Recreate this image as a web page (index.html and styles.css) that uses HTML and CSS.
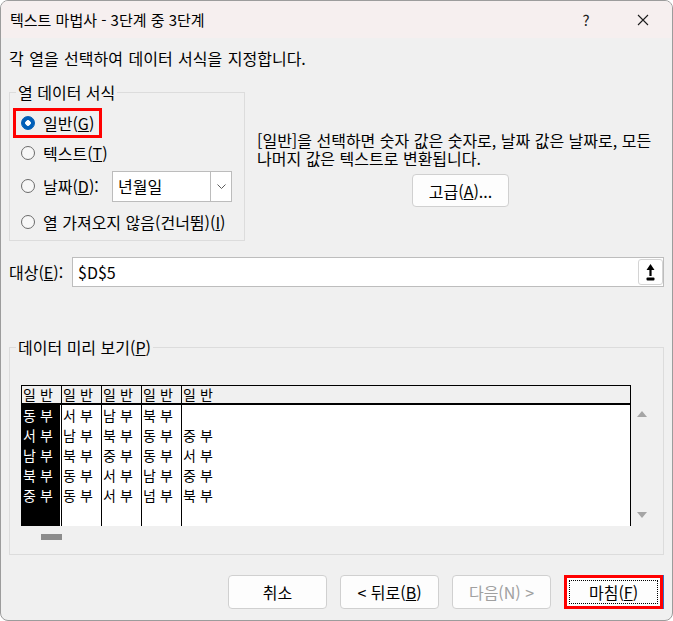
FILE: index.html
```html
<!DOCTYPE html>
<html lang="ko">
<head>
  <meta charset="UTF-8">
  <title>텍스트 마법사 - 3단계 중 3단계</title>
  <link rel="stylesheet" href="styles.css">
</head>
<body>
<div class="window">
  <div class="titlebar">
    <span class="title">텍스트 마법사 - 3단계 중 3단계</span>
    <span class="title-btn">?</span>
    <span class="title-btn close">
      <svg width="12" height="12" viewBox="0 0 12 12"><path d="M1 1L11 11M11 1L1 11" stroke="#1c1c1c" stroke-width="1.1" fill="none"/></svg>
    </span>
  </div>

  <div class="content">
    <p class="intro">각 열을 선택하여 데이터 서식을 지정합니다.</p>

    <div class="top-row">
      <fieldset class="group format-group">
        <legend>열 데이터 서식</legend>
        <div class="radio-row">
          <label class="radio marked"><input type="radio" name="fmt" checked>일반(<u>G</u>)</label>
        </div>
        <div class="radio-row">
          <label class="radio"><input type="radio" name="fmt">텍스트(<u>T</u>)</label>
        </div>
        <div class="radio-row tall">
          <label class="radio"><input type="radio" name="fmt">날짜(<u>D</u>):</label>
          <div class="combo">
            <span class="combo-text">년월일</span>
            <span class="combo-btn">
              <svg width="9" height="5" viewBox="0 0 9 5"><path d="M0.5 0.5L4.5 4.5L8.5 0.5" stroke="#5c5c5c" fill="none"/></svg>
            </span>
          </div>
        </div>
        <div class="radio-row tall">
          <label class="radio"><input type="radio" name="fmt">열 가져오지 않음(건너뜀)(<u>I</u>)</label>
        </div>
      </fieldset>

      <div class="desc">
        <p>[일반]을 선택하면 숫자 값은 숫자로, 날짜 값은 날짜로, 모든 나머지 값은 텍스트로 변환됩니다.</p>
        <button type="button" class="btn btn-adv">고급(<u>A</u>)...</button>
      </div>
    </div>

    <div class="target-row">
      <label>대상(<u>E</u>):</label>
      <div class="target-input">
        <span>$D$5</span>
        <span class="ref-btn">
          <svg width="9" height="17" viewBox="0 0 9 17"><path d="M4.5 0L8.5 6H5.6V12H3.4V6H0.5Z" fill="#000"/><rect x="0.5" y="13.5" width="8" height="3" rx="1" fill="#000"/></svg>
        </span>
      </div>
    </div>

    <fieldset class="group preview-group">
      <legend>데이터 미리 보기(<u>P</u>)</legend>
      <div class="preview-body">
        <table class="preview-table">
          <tr><th>일반</th><th>일반</th><th>일반</th><th>일반</th><th>일반</th></tr>
          <tr><td>동부</td><td>서부</td><td>남부</td><td>북부</td><td></td></tr>
          <tr><td>서부</td><td>남부</td><td>북부</td><td>동부</td><td>중부</td></tr>
          <tr><td>남부</td><td>북부</td><td>중부</td><td>동부</td><td>서부</td></tr>
          <tr><td>북부</td><td>동부</td><td>서부</td><td>남부</td><td>중부</td></tr>
          <tr><td>중부</td><td>동부</td><td>서부</td><td>넘부</td><td>북부</td></tr>
          <tr class="filler"><td></td><td></td><td></td><td></td><td></td></tr>
        </table>
        <div class="vscroll">
          <span class="arrow-up"></span>
          <span class="arrow-down"></span>
        </div>
      </div>
      <div class="hscroll"><div class="hscroll-thumb"></div></div>
    </fieldset>

    <div class="footer">
      <button type="button" class="btn">취소</button>
      <button type="button" class="btn">&lt; 뒤로(<u>B</u>)</button>
      <button type="button" class="btn btn-disabled">다음(N) &gt;</button>
      <button type="button" class="btn btn-finish">마침(<u>F</u>)</button>
    </div>
  </div>
</div>
</body>
</html>
```

FILE: styles.css
```css
body {
  margin: 0;
  background: #fff;
  font-family: "Noto Sans CJK KR", sans-serif;
  font-size: 16px;
  color: #000;
}

.window {
  width: 673px;
  height: 621px;
  box-sizing: border-box;
  border: 1px solid #9c9c9c;
  border-radius: 8px;
  overflow: hidden;
  background: #f0f0f0;
}

.titlebar {
  height: 37px;
  display: flex;
  align-items: center;
  padding: 0 6px 0 9px;
  background: #f6efef;
  font-size: 15px;
}

.title {
  flex: 1;
}

.title-btn {
  width: 46px;
  text-align: center;
  color: #1c1c1c;
}

.title-btn.close {
  margin-left: 11px;
  display: flex;
  justify-content: center;
}

.content {
  padding: 0 8px;
}

.intro {
  margin: 10px 0 0;
  line-height: 20px;
  word-spacing: 1px;
}

.top-row {
  display: flex;
  margin-top: 14px;
}

.group {
  margin: 0;
  min-width: 0;
  border: 1px solid #dcdcdc;
}

.group legend {
  padding: 0 2px;
  margin-left: 3px;
  line-height: 20px;
}

.format-group {
  width: 236px;
  box-sizing: border-box;
  padding: 6px 12px 0 3px;
}

.radio-row {
  display: flex;
  align-items: center;
  height: 30px;
}

.radio-row.tall {
  height: 36px;
}

.radio {
  display: inline-flex;
  align-items: center;
  height: 30px;
  box-sizing: border-box;
  border: 3px solid transparent;
  padding: 0 5px;
  white-space: nowrap;
}

.radio.marked {
  border-color: #f00;
}

.radio input {
  appearance: none;
  width: 14px;
  height: 14px;
  margin: 0 8px 0 0;
  box-sizing: border-box;
  border: 1px solid #6b6b6b;
  border-radius: 50%;
  background: #f7f7f7;
}

.radio input:checked {
  border-color: #005fb8;
  background: radial-gradient(circle, #fff 0 2.5px, #005fb8 3px);
}

.combo {
  margin-left: auto;
  width: 120px;
  height: 31px;
  box-sizing: border-box;
  display: flex;
  border: 1px solid #bcbcbc;
  background: #fff;
}

.combo-text {
  flex: 1;
  padding-left: 5px;
  line-height: 29px;
}

.combo-btn {
  width: 20px;
  border-left: 1px solid #bcbcbc;
  display: flex;
  align-items: center;
  justify-content: center;
}

.desc {
  flex: 1;
  margin-left: 12px;
  padding-top: 49px;
}

.desc p {
  margin: 0;
  line-height: 18px;
}

.btn {
  font: inherit;
  color: #000;
  width: 99px;
  height: 34px;
  padding: 0;
  background: #fdfdfd;
  border: 1px solid #d0d0d0;
  border-radius: 4px;
}

.btn-adv {
  display: block;
  width: 97px;
  height: 33px;
  margin: 7px auto 0;
}

.target-row {
  display: flex;
  align-items: center;
  margin-top: 16px;
}

.target-row label {
  width: 63px;
}

.target-input {
  flex: 1;
  height: 30px;
  box-sizing: border-box;
  display: flex;
  align-items: center;
  padding-left: 5px;
  border: 1px solid #bdbdbd;
  background: #fff;
}

.target-input span:first-child {
  flex: 1;
}

.ref-btn {
  width: 25px;
  height: 26px;
  box-sizing: border-box;
  display: flex;
  align-items: center;
  justify-content: center;
  border: 1px solid #d4d4d4;
  border-radius: 3px;
  background: #fff;
}

.preview-group {
  margin-top: 50px;
  padding: 28px 0 0 3px;
}

.preview-body {
  display: flex;
  margin-left: 8px;
}

.preview-table {
  width: 610px;
  border-collapse: separate;
  border-spacing: 0;
  table-layout: fixed;
  font-size: 14px;
  letter-spacing: 4px;
}

.preview-table th,
.preview-table td {
  box-sizing: border-box;
  padding: 0 0 0 1px;
  border-left: 1px solid #000;
  text-align: left;
  font-weight: normal;
  white-space: nowrap;
  overflow: hidden;
}

.preview-table th {
  width: 40px;
  height: 20px;
  line-height: 17px;
  border-top: 1px solid #000;
  border-bottom: 2px solid #000;
}

.preview-table th:last-child {
  width: auto;
}

.preview-table td {
  height: 20px;
  line-height: 20px;
  background: #fff;
}

.preview-table th:last-child,
.preview-table td:last-child {
  border-right: 1px solid #000;
}

.preview-table td:first-child {
  background: #000;
  color: #fff;
  box-shadow: inset -1px 0 #fff;
}

.preview-table .filler td {
  height: 21px;
}

.vscroll {
  width: 22px;
  box-sizing: border-box;
  display: flex;
  flex-direction: column;
  justify-content: space-between;
  align-items: center;
  padding: 26px 0 8px;
}

.arrow-up {
  border-left: 5px solid transparent;
  border-right: 5px solid transparent;
  border-bottom: 6px solid #a5a5a5;
}

.arrow-down {
  border-left: 5px solid transparent;
  border-right: 5px solid transparent;
  border-top: 6px solid #a5a5a5;
}

.hscroll {
  height: 28px;
  box-sizing: border-box;
  margin-left: 8px;
  padding-top: 8px;
}

.hscroll-thumb {
  width: 21px;
  height: 6px;
  margin-left: 20px;
  background: #8c8c8c;
}

.footer {
  display: flex;
  justify-content: flex-end;
  gap: 13px;
  margin-top: 20px;
  padding-right: 1px;
}

.btn-disabled {
  color: #a0a0a0;
}

.btn-finish {
  border: 3px solid #f00;
  border-radius: 0;
  outline: 1px dotted #000;
  outline-offset: -6px;
  box-shadow: 1px 0 0 #2a6fc9;
}
```
